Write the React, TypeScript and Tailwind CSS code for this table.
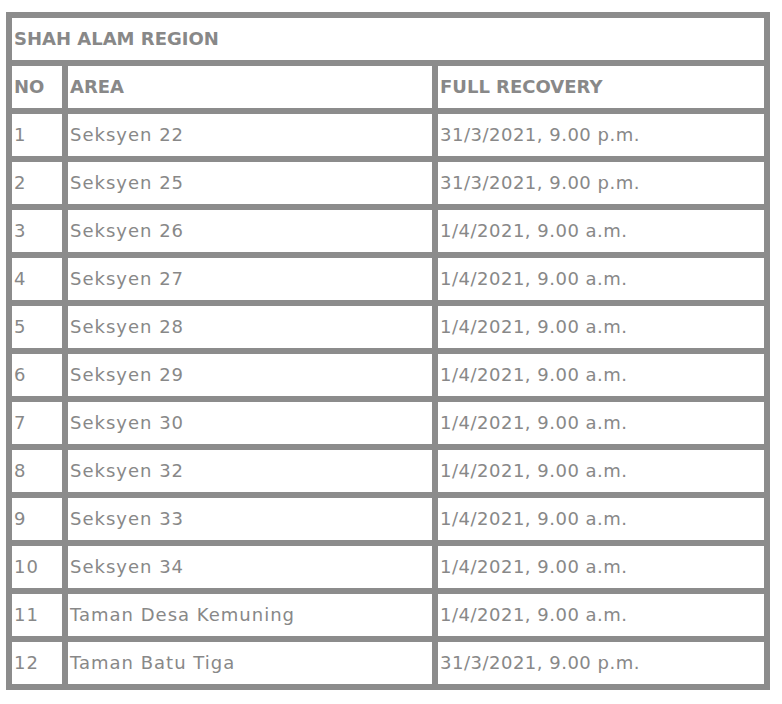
const rows: [string, string, string][] = [
  ["1", "Seksyen 22", "31/3/2021, 9.00 p.m."],
  ["2", "Seksyen 25", "31/3/2021, 9.00 p.m."],
  ["3", "Seksyen 26", "1/4/2021, 9.00 a.m."],
  ["4", "Seksyen 27", "1/4/2021, 9.00 a.m."],
  ["5", "Seksyen 28", "1/4/2021, 9.00 a.m."],
  ["6", "Seksyen 29", "1/4/2021, 9.00 a.m."],
  ["7", "Seksyen 30", "1/4/2021, 9.00 a.m."],
  ["8", "Seksyen 32", "1/4/2021, 9.00 a.m."],
  ["9", "Seksyen 33", "1/4/2021, 9.00 a.m."],
  ["10", "Seksyen 34", "1/4/2021, 9.00 a.m."],
  ["11", "Taman Desa Kemuning", "1/4/2021, 9.00 a.m."],
  ["12", "Taman Batu Tiga", "31/3/2021, 9.00 p.m."],
];

const cell = "bg-white h-[42px] flex items-center pl-[2px] pb-[2px] whitespace-nowrap";

const App = () => {
  return (
    <div className="bg-white min-h-[704px] pt-[12px] pl-[6px] font-['DejaVu_Sans',sans-serif] text-[18px] text-[#888888]">
      <div className="w-[764px] grid grid-cols-[50px_364px_1fr] gap-[6px] p-[6px] bg-[#8c8c8c]">
        <div className={`${cell} col-span-3 font-bold`}>SHAH ALAM REGION</div>
        <div className={`${cell} font-bold`}>NO</div>
        <div className={`${cell} font-bold`}>AREA</div>
        <div className={`${cell} font-bold`}>FULL RECOVERY</div>
        {rows.map(([no, area, time]) => (
          <>
            <div key={no + "a"} className={`${cell} tracking-[1px]`}>{no}</div>
            <div key={no + "b"} className={`${cell} tracking-[1px]`}>{area}</div>
            <div key={no + "c"} className={`${cell} tracking-[0.5px]`}>{time}</div>
          </>
        ))}
      </div>
    </div>
  );
};

export default App;
